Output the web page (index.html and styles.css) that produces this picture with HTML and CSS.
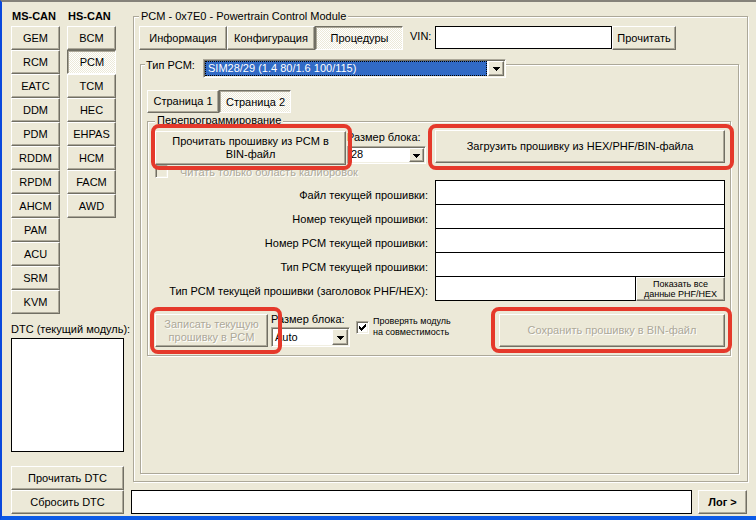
FILE: index.html
```html
<!DOCTYPE html>
<html lang="ru">
<head>
<meta charset="utf-8">
<title>PCM - Powertrain Control Module</title>
<link rel="stylesheet" href="styles.css">
</head>
<body>
<div class="window">
  <aside class="left">
    <div class="bus-cols">
      <div class="bus">
        <div class="bus-title">MS-CAN</div>
        <div class="btn mod">GEM</div>
        <div class="btn mod">RCM</div>
        <div class="btn mod">EATC</div>
        <div class="btn mod">DDM</div>
        <div class="btn mod">PDM</div>
        <div class="btn mod">RDDM</div>
        <div class="btn mod">RPDM</div>
        <div class="btn mod">AHCM</div>
        <div class="btn mod">PAM</div>
        <div class="btn mod">ACU</div>
        <div class="btn mod">SRM</div>
        <div class="btn mod">KVM</div>
      </div>
      <div class="bus">
        <div class="bus-title">HS-CAN</div>
        <div class="btn mod">BCM</div>
        <div class="btn mod pressed">PCM</div>
        <div class="btn mod">TCM</div>
        <div class="btn mod">HEC</div>
        <div class="btn mod">EHPAS</div>
        <div class="btn mod">HCM</div>
        <div class="btn mod">FACM</div>
        <div class="btn mod">AWD</div>
      </div>
    </div>
    <div class="dtc-label">DTC (текущий модуль):</div>
    <div class="dtc-list"></div>
    <div class="btn dtc-btn dtc-first">Прочитать DTC</div>
    <div class="btn dtc-btn">Сбросить DTC</div>
  </aside>

  <main class="right">
    <section class="group outer-group">
      <div class="group-title outer-title">PCM - 0x7E0 - Powertrain Control Module</div>
      <div class="top-row">
        <div class="tabs">
          <div class="btn tab">Информация</div>
          <div class="btn tab">Конфигурация</div>
          <div class="btn tab pressed">Процедуры</div>
        </div>
        <span class="vin-label">VIN:</span>
        <div class="textbox vin-box"></div>
        <div class="btn vin-read">Прочитать</div>
      </div>

      <section class="group pcm-group">
        <div class="pcm-title">
          <span class="pcm-label">Тип PCM:</span>
          <div class="combo pcm-combo">
            <div class="combo-value selected">SIM28/29 (1.4 80/1.6 100/115)</div>
            <div class="btn combo-btn"><svg width="7" height="4" viewBox="0 0 7 4" shape-rendering="crispEdges"><path d="M0 0h7v1h-1v1h-1v1h-1v1h-1v-1h-1v-1h-1v-1h-1z" fill="#000"/></svg></div>
          </div>
        </div>

        <div class="tabs page-tabs">
          <div class="btn page-tab">Страница 1</div>
          <div class="btn page-tab pressed">Страница 2</div>
        </div>

        <section class="group reprog">
          <div class="group-title reprog-title">Перепрограммирование</div>

          <div class="row row-top">
            <div class="btn read-btn">Прочитать прошивку из PCM в<br>BIN-файл</div>
            <div class="block-size">
              <div class="block-label">Размер блока:</div>
              <div class="combo small-combo top-combo">
                <div class="combo-value">28</div>
                <div class="btn combo-btn"><svg width="7" height="4" viewBox="0 0 7 4" shape-rendering="crispEdges"><path d="M0 0h7v1h-1v1h-1v1h-1v1h-1v-1h-1v-1h-1v-1h-1z" fill="#000"/></svg></div>
              </div>
            </div>
            <div class="btn load-btn">Загрузить прошивку из HEX/PHF/BIN-файла</div>
          </div>

          <div class="row cal-row">
            <div class="checkbox checkbox-disabled"></div>
            <div class="cal-text disabled">Читать только область калибровок</div>
          </div>

          <div class="fields">
            <div class="f-label">Файл текущей прошивки:</div>
            <div class="textbox field"></div>
            <div class="f-label">Номер текущей прошивки:</div>
            <div class="textbox field"></div>
            <div class="f-label">Номер PCM текущей прошивки:</div>
            <div class="textbox field"></div>
            <div class="f-label">Тип PCM текущей прошивки:</div>
            <div class="textbox field"></div>
            <div class="f-label">Тип PCM текущей прошивки (заголовок PHF/HEX):</div>
            <div class="field-last">
              <div class="textbox field field-short"></div>
              <div class="btn show-btn">Показать все<br>данные PHF/HEX</div>
            </div>
          </div>

          <div class="row row-bottom">
            <div class="btn write-btn disabled">Записать текущую<br>прошивку в PCM</div>
            <div class="block-size block-size-2">
              <div class="block-label">Размер блока:</div>
              <div class="combo small-combo bottom-combo">
                <div class="combo-value">Auto</div>
                <div class="btn combo-btn"><svg width="7" height="4" viewBox="0 0 7 4" shape-rendering="crispEdges"><path d="M0 0h7v1h-1v1h-1v1h-1v1h-1v-1h-1v-1h-1v-1h-1z" fill="#000"/></svg></div>
              </div>
            </div>
            <div class="checkbox check-compat"><svg width="7" height="7" viewBox="0 0 7 7" shape-rendering="crispEdges"><path d="M0 2h1v3h-1z M1 3h1v3h-1z M2 4h1v3h-1z M3 3h1v3h-1z M4 2h1v3h-1z M5 1h1v3h-1z M6 0h1v3h-1z" fill="#000"/></svg></div>
            <div class="compat-text">Проверять модуль<br>на совместимость</div>
            <div class="btn save-btn disabled">Сохранить прошивку в BIN-файл</div>
          </div>
        </section>
      </section>
    </section>

    <div class="bottom-row">
      <div class="textbox log-box"></div>
      <div class="btn log-btn">Лог &gt;</div>
    </div>
  </main>

  <div class="hl hl-read"></div>
  <div class="hl hl-load"></div>
  <div class="hl hl-write"></div>
  <div class="hl hl-save"></div>
</div>
</body>
</html>
```

FILE: styles.css
```css
* { box-sizing: border-box; }

html, body {
  margin: 0;
  padding: 0;
}

body {
  width: 756px;
  height: 520px;
  overflow: hidden;
  background: #ECE9D8;
  font-family: "Liberation Sans", Arial, sans-serif;
  font-size: 11px;
  color: #000;
}

.window {
  position: relative;
  width: 756px;
  height: 520px;
  display: flex;
  border-top: 2px solid #85827a;
  border-left: 2px solid #0a48dc;
  border-bottom: 4px solid #0c5ae6;
  background: #ECE9D8;
}

/* ---------- generic controls ---------- */
.btn {
  display: flex;
  align-items: center;
  justify-content: center;
  text-align: center;
  background: #ECE9D8;
  border: 1px solid;
  border-color: #fff #716F64 #716F64 #fff;
  box-shadow: inset -1px -1px 0 #ACA899;
  line-height: 13px;
  flex: none;
  white-space: nowrap;
}

.pressed {
  border-color: #716F64 #fff #fff #716F64;
  box-shadow: inset 1px 1px 0 #ACA899;
  background-color: #fff;
  background-image: repeating-conic-gradient(#ECE9D8 0 25%, #ffffff 0 50%);
  background-size: 2px 2px;
  padding: 1px 0 0 1px;
}

.disabled {
  color: #ACA899;
  text-shadow: 1px 1px 0 #fff;
}

.textbox {
  background: #fff;
  border: 1px solid #000;
  flex: none;
}

.group {
  border: 1px solid #ACA899;
  box-shadow: inset 1px 1px 0 #fff, 1px 1px 0 #fff;
  display: flex;
  flex-direction: column;
  flex: none;
}

.group-title {
  align-self: flex-start;
  background: #ECE9D8;
  padding: 0 2px;
  line-height: 13px;
  white-space: nowrap;
}

.combo {
  display: flex;
  background: #fff;
  border: 1px solid;
  border-color: #ACA899 #fff #fff #ACA899;
  box-shadow: inset 1px 1px 0 #716F64, inset -1px -1px 0 #F1EFE2;
  padding: 1px;
  flex: none;
}

.combo-value {
  flex: 1;
  line-height: 13px;
  padding-left: 2px;
  white-space: nowrap;
  overflow: hidden;
}

.combo-btn {
  width: 16px;
  height: 100%;
  padding-top: 1px;
}

.checkbox {
  width: 13px;
  height: 13px;
  background: #fff;
  border: 1px solid;
  border-color: #ACA899 #fff #fff #ACA899;
  box-shadow: inset 1px 1px 0 #716F64, inset -1px -1px 0 #F1EFE2;
  display: flex;
  align-items: center;
  justify-content: center;
  flex: none;
}

.checkbox-disabled {
  background: #ECE9D8;
}

/* ---------- left panel ---------- */
.left {
  width: 127px;
  flex: none;
  padding-left: 9px;
  display: flex;
  flex-direction: column;
}

.bus-cols {
  display: flex;
  gap: 7px;
  margin-top: 8px;
}

.bus {
  width: 49px;
  display: flex;
  flex-direction: column;
}

.bus-title {
  font-weight: bold;
  line-height: 13px;
  padding-left: 1px;
  margin-bottom: 3px;
  white-space: nowrap;
}

.mod {
  height: 24px;
}

.dtc-label {
  margin-top: 9px;
  line-height: 13px;
  white-space: nowrap;
}

.dtc-list {
  margin-top: 2px;
  width: 113px;
  height: 114px;
  background: #fff;
  border: 1px solid #000;
}

.dtc-btn {
  width: 113px;
  height: 24px;
}

.dtc-first {
  margin-top: 14px;
}

/* ---------- right panel ---------- */
.right {
  flex: 1;
  display: flex;
  flex-direction: column;
}

.outer-group {
  margin-top: 14px;
  margin-left: 4px;
  width: 615px;
  height: 466px;
}

.outer-title {
  margin-top: -7px;
  margin-left: 5px;
}

.top-row {
  display: flex;
  align-items: flex-start;
  margin-top: 3px;
  margin-left: 5px;
}

.tabs {
  display: flex;
}

.tab {
  width: 88px;
  height: 24px;
}

.vin-label {
  width: 25px;
  margin-left: 7px;
  margin-top: 4px;
  line-height: 13px;
}

.vin-box {
  width: 177px;
  height: 23px;
}

.vin-read {
  width: 64px;
  height: 24px;
}

.pcm-group {
  margin-top: 14px;
  margin-left: 6px;
  width: 599px;
  height: 410px;
}

.pcm-title {
  display: flex;
  align-items: flex-start;
  align-self: flex-start;
  margin-top: -6px;
  margin-left: 4px;
  padding-left: 1px;
  background: #ECE9D8;
  height: 19px;
}

.pcm-label {
  width: 57px;
  line-height: 13px;
  white-space: nowrap;
}

.pcm-combo {
  width: 303px;
  height: 19px;
}

.selected {
  background: #316AC5;
  color: #fff;
  outline: 1px dotted #000;
  outline-offset: -1px;
  margin: 0 1px 0 0;
  line-height: 15px;
  padding-left: 3px;
}

.page-tabs {
  margin-top: 12px;
  margin-left: 6px;
}

.page-tab {
  width: 72px;
  height: 23px;
}

.reprog {
  margin-top: 8px;
  margin-left: 6px;
  width: 584px;
  height: 235px;
}

.reprog-title {
  margin-top: -8px;
  margin-left: 7px;
}

.row {
  display: flex;
  align-items: flex-start;
  margin-left: 7px;
}

.row-top {
  margin-top: 4px;
}

.read-btn {
  width: 191px;
  height: 34px;
}

.block-size {
  width: 79px;
  margin-left: 1px;
  display: flex;
  flex-direction: column;
}

.block-label {
  line-height: 13px;
  white-space: nowrap;
}

.small-combo {
  width: 79px;
}

.top-combo {
  margin-top: 2px;
  height: 18px;
}

.top-combo .combo-btn {
  width: 15px;
}

.load-btn {
  width: 290px;
  height: 33px;
  margin-left: 9px;
  margin-top: -1px;
}

.cal-row {
  height: 13px;
}

.cal-text {
  margin-left: 12px;
  margin-top: 1px;
  line-height: 13px;
  white-space: nowrap;
}

.fields {
  margin-top: 2px;
  display: grid;
  grid-template-columns: 280px 290px;
  grid-auto-rows: 24px;
  column-gap: 7px;
}

.f-label {
  text-align: right;
  padding-top: 9px;
  line-height: 13px;
  white-space: nowrap;
}

.field {
  height: 25px;
}

.field-last {
  display: flex;
  align-items: flex-start;
}

.field-short {
  flex: 1;
}

.show-btn {
  width: 89px;
  height: 24px;
  margin-top: 1px;
  font-size: 9px;
  line-height: 10px;
}

.row-bottom {
  margin-top: 14px;
  width: 570px;
}

.write-btn {
  width: 113px;
  height: 33px;
}

.block-size-2 {
  margin-left: 3px;
  margin-top: -1px;
}

.bottom-combo {
  margin-top: 1px;
  height: 20px;
}

.bottom-combo .combo-value {
  line-height: 16px;
}

.check-compat {
  margin-left: 6px;
  margin-top: 7px;
}

.compat-text {
  margin-left: 4px;
  margin-top: 2px;
  font-size: 9px;
  line-height: 11px;
  white-space: nowrap;
}

.save-btn {
  margin-left: auto;
  width: 226px;
  height: 33px;
}

/* ---------- bottom row ---------- */
.bottom-row {
  display: flex;
  margin-top: 8px;
}

.log-box {
  margin-left: 2px;
  width: 561px;
  height: 24px;
}

.log-btn {
  margin-left: 6px;
  width: 49px;
  height: 24px;
  font-weight: bold;
}

/* ---------- red highlight overlays ---------- */
.hl {
  position: absolute;
  border: 4px solid #E5392B;
  border-radius: 8px;
  pointer-events: none;
}

.hl-read  { left: 149px; top: 122px; width: 201px; height: 46px; }
.hl-load  { left: 426px; top: 122px; width: 306px; height: 46px; }
.hl-write { left: 148px; top: 305px; width: 132px; height: 47px; }
.hl-save  { left: 489px; top: 305px; width: 241px; height: 46px; }
```
